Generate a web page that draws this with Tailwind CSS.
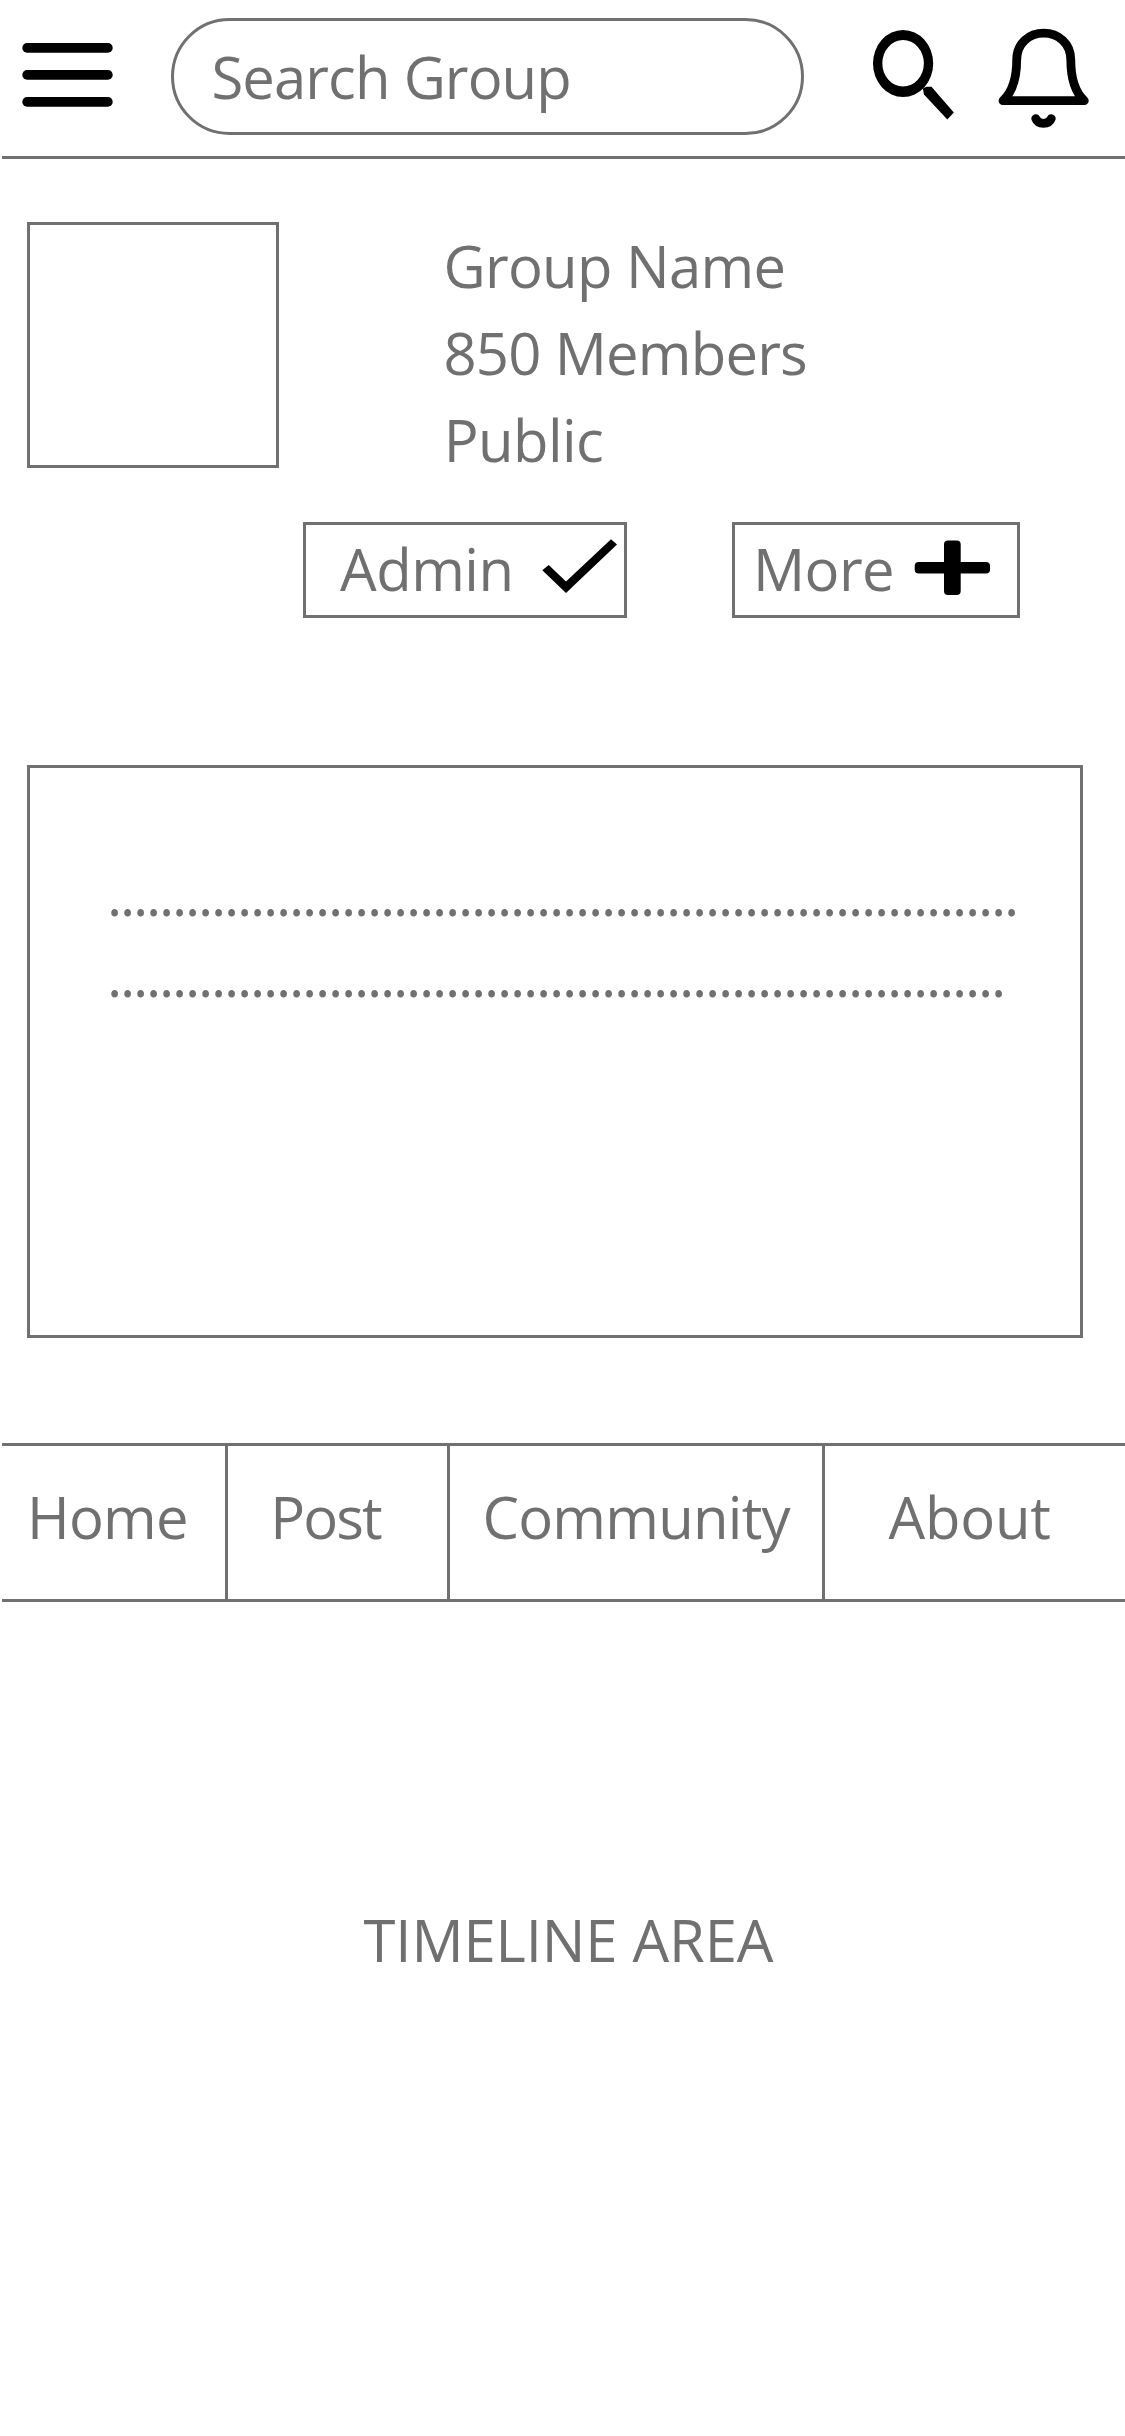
<!DOCTYPE html>
<html lang="en">
<head>
<meta charset="utf-8">
<title>Group</title>
<script src="https://cdn.jsdelivr.net/npm/@tailwindcss/browser@4"></script>
</head>
<body class="bg-white">
<div class="flex h-[2436px] w-[1125px] flex-col overflow-hidden bg-white pl-[2px] font-['Open_Sans',sans-serif] text-[58px] leading-[79px] whitespace-nowrap text-[#707070]">

  <header class="flex h-[159px] shrink-0 items-start border-b-3 border-[#707070] pl-[20px]">
    <button class="mt-[43px] shrink-0" aria-label="Menu">
      <svg class="block h-[64px] w-[91px] fill-black" viewBox="0 0 91 64">
        <rect x="0.3" y="0.1" width="90.4" height="9.6" rx="4.8"/>
        <rect x="0.3" y="27.1" width="90.4" height="9.6" rx="4.8"/>
        <rect x="0.3" y="54.1" width="90.4" height="9.6" rx="4.8"/>
      </svg>
    </button>
    <div class="mt-[18px] ml-[58px] h-[117px] w-[633px] shrink-0 rounded-full border-3 border-[#707070] pt-[16px] pl-[37.5px]">
      <span class="tracking-[-0.94px]">Search Group</span>
    </div>
    <button class="mt-[30px] ml-[69px] shrink-0" aria-label="Search">
      <svg class="block h-[90px] w-[81px] fill-black" viewBox="873 30 81 90">
        <path fill-rule="evenodd" d="M903.1 30a30.1 33.5 0 0 1 0 67a30.1 33.5 0 0 1 0-67ZM903.1 40.1a20.8 23.2 0 0 0 0 46.4a20.8 23.2 0 0 0 0-46.4Z"/>
        <path d="M922.8 88.5L926.5 86.7H931.5L953.8 112.6L947.3 119.6L924 94.6Z"/>
      </svg>
    </button>
    <button class="mt-[28px] ml-[44px] shrink-0" aria-label="Notifications">
      <svg class="block h-[101px] w-[91px] fill-none stroke-black" viewBox="998 28 91 101" stroke-width="8.8" stroke-linecap="round" stroke-linejoin="round">
        <path d="M1003 100.7H1084.3C1075 92 1070.8 78 1070.8 60C1070.8 43 1058 33.2 1043.7 33.2C1029.4 33.2 1016.7 43 1016.7 60C1016.7 78 1012.3 92 1003 100.7Z"/>
        <path d="M1035.7 118.6C1038 124.9 1049 124.9 1051.3 118.6"/>
      </svg>
    </button>
  </header>

  <section class="mt-[63px] flex shrink-0 pl-[25px]">
    <div class="h-[246px] w-[252px] shrink-0 border-3 border-[#707070]"></div>
    <div class="ml-[164px] flex h-[261px] flex-col leading-[87px]">
      <span class="ml-[0.5px] tracking-[-0.72px]">Group Name</span>
      <span class="ml-[0.5px] tracking-[-0.82px]">850 Members</span>
      <span class="ml-[0.8px] tracking-[-0.6px]">Public</span>
    </div>
  </section>

  <div class="mt-[39px] flex shrink-0 gap-[105px] pl-[301px] leading-[87px]">
    <button class="flex h-[96px] w-[324px] items-start border-3 border-[#707070] pl-[34px]">
      <span class="w-[202px] text-left tracking-[-0.5px]">Admin</span>
      <svg class="mt-[14px] h-[54px] w-[76px] shrink-0 fill-black" viewBox="542 539 76 54">
        <path d="M542.3 570.3L548.7 564.9L566 581.4L611 539.2L617 544.5L566 593Z"/>
      </svg>
    </button>
    <button class="flex h-[96px] w-[288px] items-start border-3 border-[#707070] pl-[18px]">
      <span class="w-[161px] text-left tracking-[-0.55px]">More</span>
      <svg class="mt-[15px] h-[56px] w-[77px] shrink-0 fill-black" viewBox="914 540 77 56">
        <rect x="914.7" y="562" width="75.3" height="11.4" rx="4"/>
        <rect x="944" y="540.4" width="16.7" height="54.6" rx="4"/>
      </svg>
    </button>
  </div>

  <section class="mt-[147px] ml-[25px] flex h-[573px] w-[1056px] shrink-0 flex-col border-3 border-[#707070] pt-[85px] pl-[77px] leading-[81px] tracking-[-2.235px]">
    <p>......................................................................</p>
    <p>.....................................................................</p>
  </section>

  <nav class="mt-[105px] flex h-[159px] shrink-0 border-y-3 border-[#707070]">
    <a class="w-[226px] border-r-3 border-[#707070] pt-[31px] pl-[25px] tracking-[-0.82px]">Home</a>
    <a class="w-[222px] border-r-3 border-[#707070] pt-[31px] pl-[42.3px] tracking-[-1.9px]">Post</a>
    <a class="w-[375px] border-r-3 border-[#707070] pt-[31px] pl-[32.5px] tracking-[-0.78px]">Community</a>
    <a class="flex-1 pt-[31px] pl-[63.5px] tracking-[-0.2px]">About</a>
  </nav>

  <main class="mt-[298px] pl-[361.5px] tracking-[-0.12px]">TIMELINE AREA</main>
</div>
</body>
</html>
